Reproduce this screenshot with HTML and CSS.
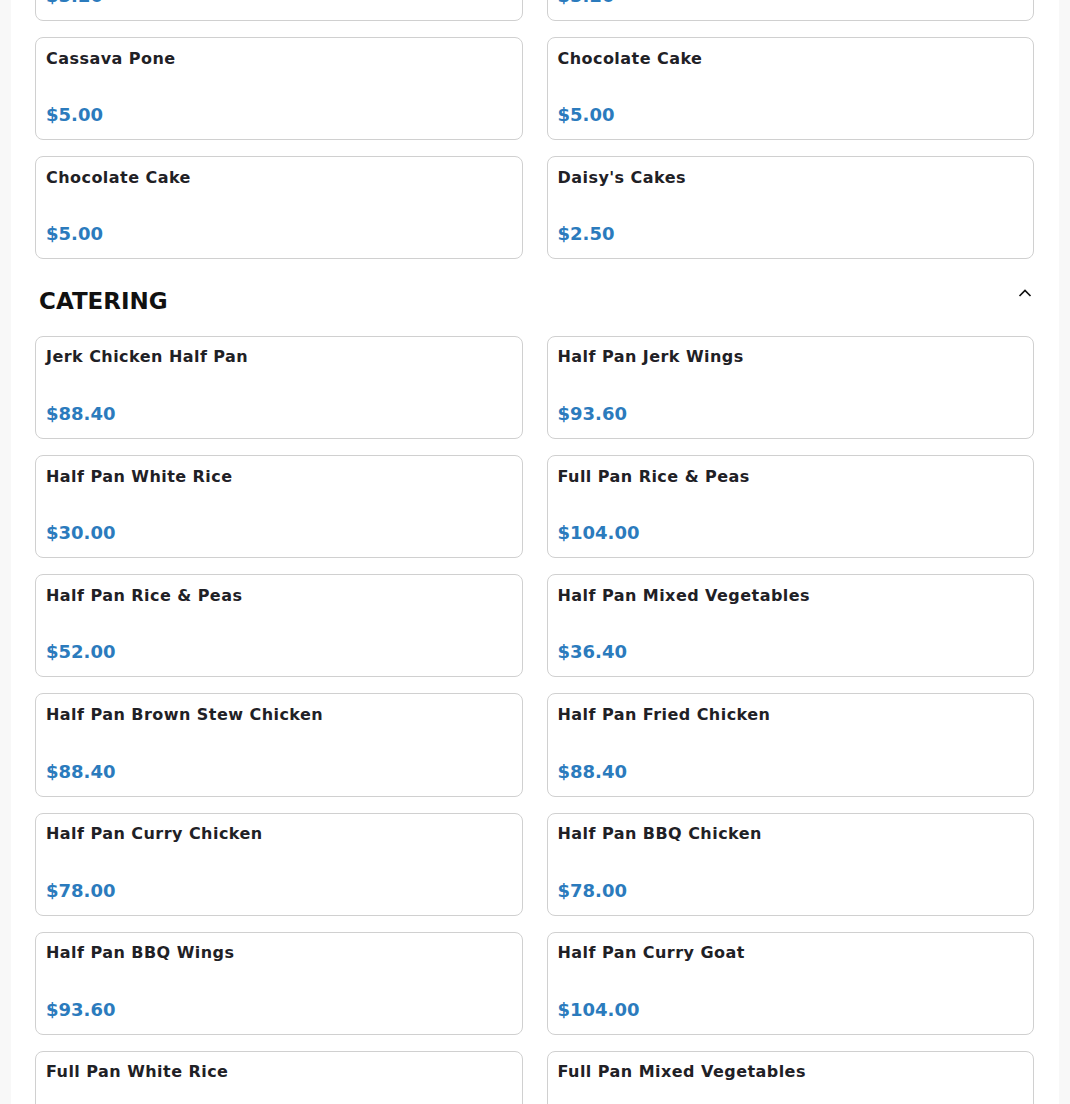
FILE: index.html
```html
<!DOCTYPE html>
<html>
<head>
<meta charset="utf-8">
<link rel="stylesheet" href="styles.css">
</head>
<body>
<div class="page">
  <div class="grid first">
    <div class="card"><div class="name">Cake Slice</div><div class="price">$5.20</div></div>
    <div class="card"><div class="name">Cake Slice</div><div class="price">$5.20</div></div>
    <div class="card"><div class="name">Cassava Pone</div><div class="price">$5.00</div></div>
    <div class="card"><div class="name">Chocolate Cake</div><div class="price">$5.00</div></div>
    <div class="card"><div class="name">Chocolate Cake</div><div class="price">$5.00</div></div>
    <div class="card"><div class="name">Daisy's Cakes</div><div class="price">$2.50</div></div>
  </div>
  <div class="section-head">
    <h2 class="section-title">CATERING</h2>
    <svg class="chev" width="14" height="10" viewBox="0 0 14 10"><path d="M1.5 8 L7 2.5 L12.5 8" fill="none" stroke="#111" stroke-width="1.7"/></svg>
  </div>
  <div class="grid">
    <div class="card"><div class="name">Jerk Chicken Half Pan</div><div class="price">$88.40</div></div>
    <div class="card"><div class="name">Half Pan Jerk Wings</div><div class="price">$93.60</div></div>
    <div class="card"><div class="name">Half Pan White Rice</div><div class="price">$30.00</div></div>
    <div class="card"><div class="name">Full Pan Rice &amp; Peas</div><div class="price">$104.00</div></div>
    <div class="card"><div class="name">Half Pan Rice &amp; Peas</div><div class="price">$52.00</div></div>
    <div class="card"><div class="name">Half Pan Mixed Vegetables</div><div class="price">$36.40</div></div>
    <div class="card"><div class="name">Half Pan Brown Stew Chicken</div><div class="price">$88.40</div></div>
    <div class="card"><div class="name">Half Pan Fried Chicken</div><div class="price">$88.40</div></div>
    <div class="card"><div class="name">Half Pan Curry Chicken</div><div class="price">$78.00</div></div>
    <div class="card"><div class="name">Half Pan BBQ Chicken</div><div class="price">$78.00</div></div>
    <div class="card"><div class="name">Half Pan BBQ Wings</div><div class="price">$93.60</div></div>
    <div class="card"><div class="name">Half Pan Curry Goat</div><div class="price">$104.00</div></div>
    <div class="card"><div class="name">Full Pan White Rice</div><div class="price">$156.00</div></div>
    <div class="card"><div class="name">Full Pan Mixed Vegetables</div><div class="price">$72.80</div></div>
  </div>
</div>
</body>
</html>
```
FILE: styles.css
```css
html, body {
  margin: 0;
  padding: 0;
  background: #f8f8f8;
  height: 1104px;
  overflow: hidden;
}
body {
  font-family: "DejaVu Sans", "Liberation Sans", sans-serif;
  color: #1f2126;
}
.page {
  margin: 0 11px;
  background: #fff;
  padding: 0 25px 0 24px;
  min-height: 1300px;
}
.grid {
  display: grid;
  grid-template-columns: 1fr 1fr;
  column-gap: 24px;
  row-gap: 16px;
}
.grid.first {
  margin-top: -82.15px;
}
.card {
  border: 1px solid #d0d0d0;
  border-radius: 8px;
  padding: 10.5px 10px 14px;
  height: 103.15px;
  box-sizing: border-box;
  display: flex;
  flex-direction: column;
  justify-content: space-between;
}
.name {
  font-size: 16px;
  font-weight: bold;
  line-height: 19px;
  letter-spacing: 0.45px;
  color: #1f2126;
}
.price {
  font-size: 18px;
  font-weight: bold;
  line-height: 21px;
  color: #2b7bbd;
}
.section-head {
  display: flex;
  justify-content: space-between;
  align-items: flex-start;
  padding: 28.7px 2px 0 4px;
  height: 48px;
  box-sizing: content-box;
}
.section-title {
  margin: 0;
  font-size: 23px;
  line-height: 26px;
  font-weight: bold;
  color: #111;
}
.chev {
  margin-top: 0;
}
```
